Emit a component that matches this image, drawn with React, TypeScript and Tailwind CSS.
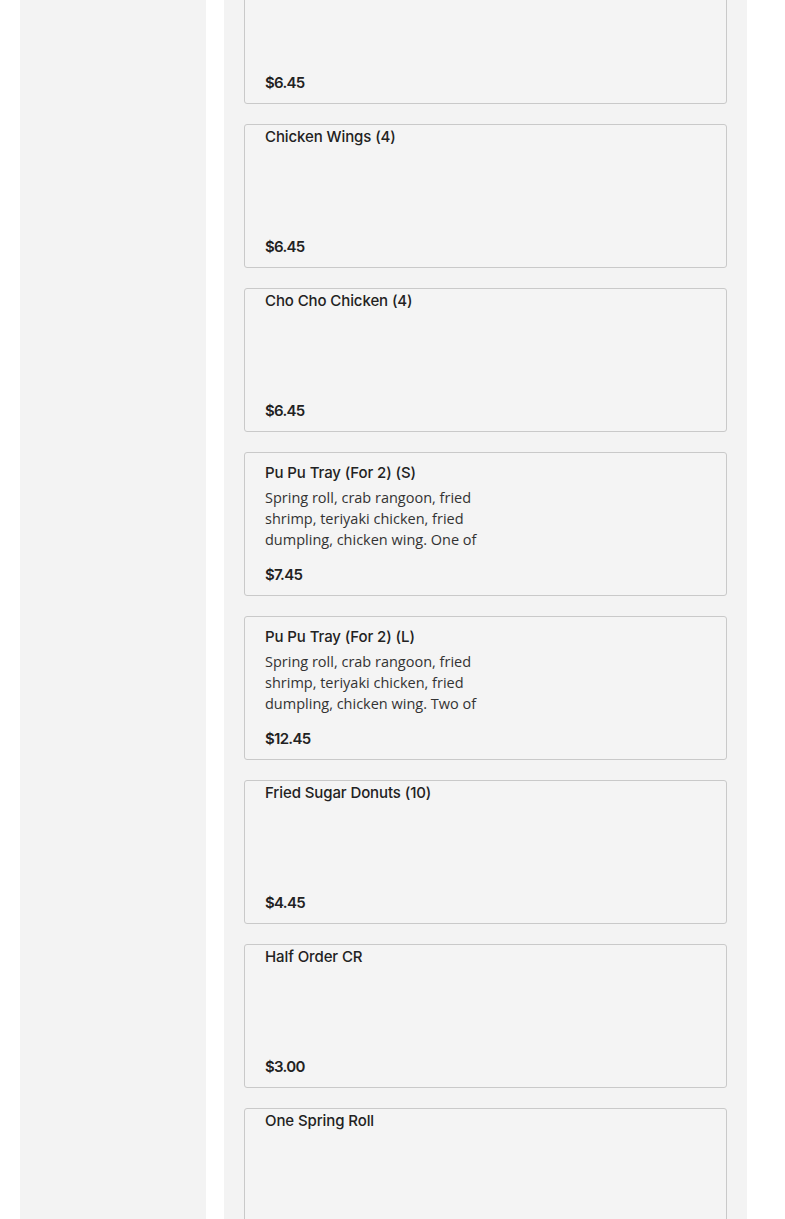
import React from "react";

type Item = { name: string; price: string; desc?: string };

const items: Item[] = [
  { name: "Egg Rolls (2)", price: "$6.45" },
  { name: "Chicken Wings (4)", price: "$6.45" },
  { name: "Cho Cho Chicken (4)", price: "$6.45" },
  {
    name: "Pu Pu Tray (For 2) (S)",
    price: "$7.45",
    desc: "Spring roll, crab rangoon, fried shrimp, teriyaki chicken, fried dumpling, chicken wing. One of each.",
  },
  {
    name: "Pu Pu Tray (For 2) (L)",
    price: "$12.45",
    desc: "Spring roll, crab rangoon, fried shrimp, teriyaki chicken, fried dumpling, chicken wing. Two of each.",
  },
  { name: "Fried Sugar Donuts (10)", price: "$4.45" },
  { name: "Half Order CR", price: "$3.00" },
  { name: "One Spring Roll", price: "$1.95" },
];

function Card({ item }: { item: Item }) {
  return (
    <div
      className={`flex h-[144px] shrink-0 flex-col justify-between rounded-[3px] border border-[#c9c9c9] bg-[#f4f4f4] px-5 pb-[8px] ${
        item.desc ? "pt-2" : "pt-0"
      }`}
    >
      <div>
        <div className="font-['Inter',sans-serif] text-[15px] font-medium leading-[24px] tracking-[-0.1px] text-[#222]">
          {item.name}
        </div>
        {item.desc && (
          <div className="mt-[2px] h-[63px] w-1/2 overflow-hidden font-['Open_Sans',sans-serif] text-[14.5px] leading-[21px] text-[#333]">
            {item.desc}
          </div>
        )}
      </div>
      <div className="font-['Inter',sans-serif] text-[15px] font-semibold leading-[24px] tracking-[-0.7px] text-[#222]">
        {item.price}
      </div>
    </div>
  );
}

export default function App() {
  return (
    <div className="flex h-[1219px] w-full overflow-hidden bg-white">
      <div className="ml-5 w-[186px] shrink-0 bg-[#f3f3f3]" />
      <div className="ml-[18px] w-[523px] shrink-0 bg-[#f3f3f3] px-5">
        <div className="-mt-[40px] flex flex-col gap-5">
          {items.map((it) => (
            <Card key={it.name} item={it} />
          ))}
        </div>
      </div>
    </div>
  );
}
